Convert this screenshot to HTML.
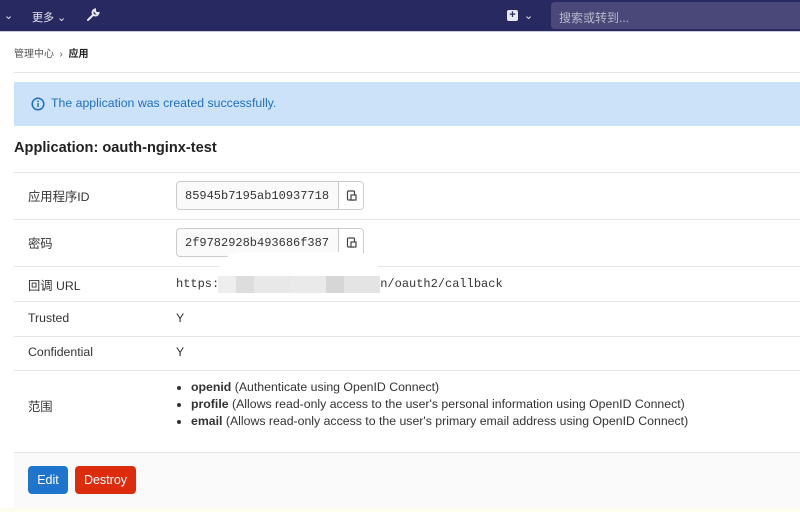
<!DOCTYPE html>
<html><head><meta charset="utf-8"><style>
*{margin:0;padding:0;box-sizing:border-box}
body{width:800px;height:512px;overflow:hidden;background:#fff;font-family:"Liberation Sans","Noto Sans CJK SC",sans-serif;color:#303030;font-size:12px;position:relative}
.nav{position:absolute;left:0;top:0;width:800px;height:32px;background:#292961;border-bottom:1px solid #c8c8d8}
.nav span{position:absolute;color:#e8e8f0;font-size:11px}
.search{position:absolute;left:551px;top:2px;width:260px;height:27px;background:#4a4878;border-radius:4px;color:#b8b8cc;font-size:12px;padding:7px 8px}
.crumb{position:absolute;left:14px;top:45px;font-size:10px;color:#555}
.hr{position:absolute;left:14px;width:786px;height:1px;background:#e5e5e5}
.alert{position:absolute;left:14px;top:82px;width:786px;height:44px;background:#cbe2f9;color:#1f6fc0;font-size:12.3px;padding:14px 0 0 37px}
.title{position:absolute;left:14px;top:140px;font-size:14.6px;font-weight:bold;color:#222}
.lbl{position:absolute;left:28px;font-size:12.3px;color:#333}
.val{position:absolute;left:176px;font-size:12.3px;color:#333}
.mono{font-family:"Liberation Mono",monospace;font-size:12px}
.inp{position:absolute;left:176px;width:188px;height:29px;border:1px solid #ccc;border-radius:4px;background:#fafafa;overflow:hidden}
.inp .t{position:absolute;left:8px;top:7px;font-family:"Liberation Mono",monospace;font-size:12px;color:#333;width:152px;overflow:hidden;white-space:nowrap}
.inp .b{position:absolute;left:161px;top:0;width:26px;height:27px;border-left:1px solid #ccc;background:#fff}
ul{position:absolute;left:191px;top:379px;font-size:12.3px;line-height:17px;color:#333}
.foot{position:absolute;left:14px;top:452px;width:786px;height:56px;background:#fafafa}
.btn{position:absolute;top:466px;height:28px;border-radius:4px;color:#fff;font-size:12.5px;text-align:center;line-height:28px}
</style></head><body>
<div class="nav">
<span style="left:4px;top:9px">&#8964;</span>
<span style="left:32px;top:9px">更多 &#8964;</span>
<svg style="position:absolute;left:86px;top:8px" width="14" height="14" viewBox="0 0 14 14"><path d="M2 12 L7 7 M9 1.5 a3 3 0 1 0 3.5 3.5 l-2 0 l-1.5-1.5z" stroke="#e8e8f0" stroke-width="2" fill="none" stroke-linecap="round"/></svg>
<div style="position:absolute;left:507px;top:10px;width:11px;height:11px;background:#e8e8f0;border-radius:2px;color:#292961;font-size:11px;font-weight:bold;line-height:11px;text-align:center">+</div>
<span style="left:524px;top:9px">&#8964;</span>
<div class="search">搜索或转到...</div>
</div>
<div class="crumb">管理中心 &nbsp;› &nbsp;<b style="color:#222">应用</b></div>
<div class="hr" style="top:72px"></div>
<div class="alert"><svg style="position:absolute;left:17px;top:15px" width="14" height="14" viewBox="0 0 14 14"><circle cx="7" cy="7" r="5.8" stroke="#1f6fc0" stroke-width="1.5" fill="none"/><rect x="6.3" y="6" width="1.4" height="4" fill="#1f6fc0"/><circle cx="7" cy="4.3" r="0.9" fill="#1f6fc0"/></svg>The application was created successfully.</div>
<div class="title">Application: oauth-nginx-test</div>
<div class="hr" style="top:172px"></div>
<div class="lbl" style="top:187px">应用程序ID</div>
<div class="inp" style="top:181px"><div class="t">85945b7195ab10937718</div><div class="b"><svg style="position:absolute;left:7px;top:7px" width="12" height="13" viewBox="0 0 12 13"><rect x="1.5" y="2" width="7" height="9" rx="1" stroke="#444" fill="none" stroke-width="1.2"/><rect x="5" y="6" width="5" height="5" stroke="#444" fill="#fff" stroke-width="1.2"/></svg></div></div>
<div class="hr" style="top:219px"></div>
<div class="lbl" style="top:234px">密码</div>
<div class="inp" style="top:228px"><div class="t">2f9782928b493686f387</div><div class="b"><svg style="position:absolute;left:7px;top:7px" width="12" height="13" viewBox="0 0 12 13"><rect x="1.5" y="2" width="7" height="9" rx="1" stroke="#444" fill="none" stroke-width="1.2"/><rect x="5" y="6" width="5" height="5" stroke="#444" fill="#fff" stroke-width="1.2"/></svg></div></div>
<div class="hr" style="top:266px"></div>
<div class="lbl" style="top:276px">回调 URL</div>
<div class="val mono" style="top:277px">https:<span style="display:inline-block;width:161px"></span>n/oauth2/callback</div>
<div style="position:absolute;left:217px;top:252px;width:163px;height:50px;background:#fff;border-radius:30px"></div>
<div style="position:absolute;left:218px;top:276px;width:162px;height:17px;background:linear-gradient(90deg,#eee 0,#eee 18px,#ddd 18px,#ddd 36px,#e8e8e8 36px,#e8e8e8 72px,#eaeaea 72px,#eaeaea 108px,#d6d6d6 108px,#d6d6d6 126px,#e4e4e4 126px)"></div>
<div class="hr" style="top:301px"></div>
<div class="lbl" style="top:311px">Trusted</div><div class="val" style="top:311px">Y</div>
<div class="hr" style="top:336px"></div>
<div class="lbl" style="top:345px">Confidential</div><div class="val" style="top:345px">Y</div>
<div class="hr" style="top:370px"></div>
<div class="lbl" style="top:397px">范围</div>
<ul><li><b>openid</b> (Authenticate using OpenID Connect)</li><li><b>profile</b> (Allows read-only access to the user's personal information using OpenID Connect)</li><li><b>email</b> (Allows read-only access to the user's primary email address using OpenID Connect)</li></ul>
<div class="foot"></div>
<div class="hr" style="top:452px"></div>
<div class="btn" style="left:28px;width:40px;background:#1f75cb">Edit</div>
<div class="btn" style="left:75px;width:61px;background:#dd2b0e">Destroy</div>
<div style="position:absolute;left:0;top:508px;width:800px;height:4px;background:#fdfdee"></div>
</body></html>
